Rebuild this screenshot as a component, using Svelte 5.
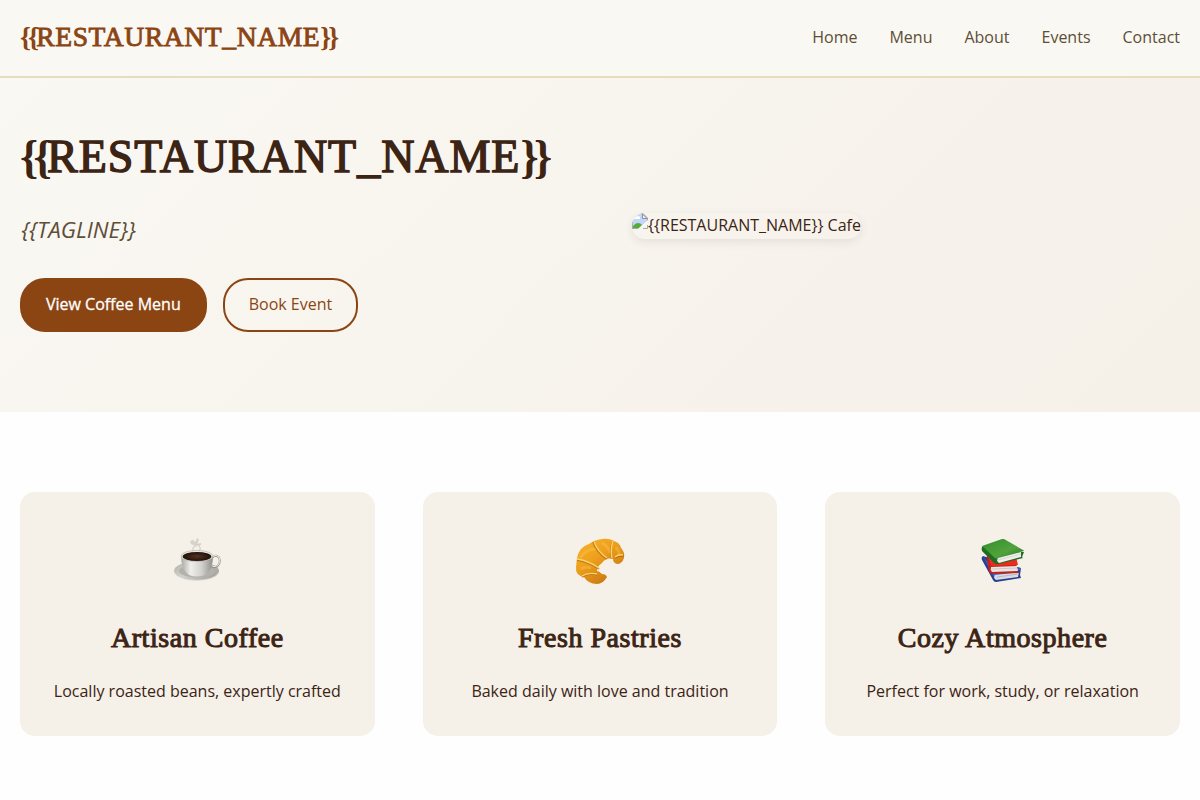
<script>
  const links = ['Home', 'Menu', 'About', 'Events', 'Contact'];
  const cards = [
    { icon: 'coffee', title: 'Artisan Coffee', text: 'Locally roasted beans, expertly crafted' },
    { icon: 'croissant', title: 'Fresh Pastries', text: 'Baked daily with love and tradition' },
    { icon: 'books', title: 'Cozy Atmosphere', text: 'Perfect for work, study, or relaxation' }
  ];
</script>

{#snippet name()}<span class="brace">{'{{'}</span>RESTAURANT_NAME<span class="brace">{'}}'}</span>{/snippet}

<header>
  <div class="logo display">{@render name()}</div>
  <nav>
    {#each links as link}<a href="#top">{link}</a>{/each}
  </nav>
</header>

<section class="hero">
  <div class="intro">
    <h1 class="display">{@render name()}</h1>
    <p class="tagline">{'{{TAGLINE}}'}</p>
    <div class="buttons">
      <a class="btn primary" href="#top">View Coffee Menu</a>
      <a class="btn" href="#top">Book Event</a>
    </div>
  </div>
  <div class="visual">
    <div class="photo">
      <svg width="16" height="16" viewBox="0 0 16 16">
        <path d="M0 1h11l4 4v4L7 16H0z" fill="#c3d5f8" />
        <path d="M0 6q1-3 4-2 2-2 4 0v2H0z" fill="#fff" />
        <path d="M0 16v-1q4-7 9-4l1 1-4 4z" fill="#55ac36" />
        <path d="M0 .5h11l4.5 4.5v4M.5 0v16M0 15.5h6M11 15.5h4.5V12" fill="none" stroke="#a5a9ad" />
        <path d="M10.5 1v4.5H15z" fill="#f5f5f5" stroke="#8d9195" />
        <path d="M16 7v3l-6 6H6z" fill="#faf8f3" />
      </svg><span>{'{{RESTAURANT_NAME}} Cafe'}</span>
    </div>
  </div>
</section>

<section class="features">
  {#each cards as card}
    <article>
      <div class="icon">
        {#if card.icon === 'coffee'}
          <svg width="60" height="60" viewBox="0 0 60 60">
            <defs>
              <linearGradient id="cup"><stop offset="0" stop-color="#aaa8a3" /><stop offset=".3" stop-color="#efeeeb" /><stop offset=".65" stop-color="#d2d0cb" /><stop offset="1" stop-color="#8f8d88" /></linearGradient>
              <linearGradient id="saucer" x2="1" y2=".5"><stop stop-color="#b2b0ab" /><stop offset=".45" stop-color="#d2d0cb" /><stop offset="1" stop-color="#aaa8a4" /></linearGradient>
              <radialGradient id="brew"><stop stop-color="#563321" /><stop offset="1" stop-color="#211009" /></radialGradient>
            </defs>
            <ellipse cx="29.5" cy="39" rx="22.5" ry="9.6" fill="url(#saucer)" />
            <ellipse cx="30" cy="39" rx="18" ry="6.5" fill="#b3b1ac" />
            <path d="M7.5 41q5 7.3 22 7.3t22-7.3" fill="none" stroke="#e7e4df" stroke-width=".7" />
            <ellipse cx="48" cy="29.5" rx="4.6" ry="5.8" transform="rotate(20 48 29.5)" fill="none" stroke="#96948f" stroke-width="2" />
            <ellipse cx="48" cy="29.1" rx="4.6" ry="5.6" transform="rotate(20 48 29.1)" fill="none" stroke="#e9e8e4" stroke-width="1" />
            <path d="M14 24q0 14 8 19 8 3 16 0 8-5 8-19z" fill="url(#cup)" />
            <ellipse cx="30" cy="24" rx="16" ry="5.6" fill="#e9e7e2" stroke="#a6a39e" stroke-width=".5" />
            <ellipse cx="30" cy="24.5" rx="14.3" ry="4.6" fill="url(#brew)" />
            <path d="M26 19q-1-3 2-5M32 19q3-3-1-6" fill="none" stroke="#b5b3ae" stroke-width="1.2" opacity=".5" />
            <path d="M23 10q3-4 4-1t3-3q3 1 1 4t3 1q1 3-3 2-3 3-4 0-3 0-4-3z" fill="#aaa9a5" opacity=".42" />
          </svg>
        {:else if card.icon === 'croissant'}
          <svg width="60" height="60" viewBox="0 0 60 60">
            <defs>
              <linearGradient id="crust" x2=".75" y2="1"><stop stop-color="#f6b52c" /><stop offset=".45" stop-color="#eea01d" /><stop offset=".75" stop-color="#d98716" /><stop offset="1" stop-color="#c46d12" /></linearGradient>
            </defs>
            <path d="M7 26Q9 15 19 12q5-4 13-5 7-1 12 2 6 2 7 7 4 4 3 10-2 6-7 6-4-1-4-5-7-2-11 4-5 3-5 8 2 0 5 3 4 0 5 3-4 7-10 7-9 0-13-7Q5 43 6 35z" fill="url(#crust)" />
            <path d="M10 26q6-9 16-9M11 37q4-3 10-1M32 11q7 4 8 10M46 15q4 5 3 9" fill="none" stroke="#ffc552" stroke-width="3" opacity=".38" />
            <path d="M29 37q-9-7-22-9M42 26q-3-6 1-17M37 27Q27 21 23 10M27 43q-8-3-15 2M45 26q4-3 9-2" fill="none" stroke="#b5680f" stroke-width="1.8" opacity=".7" />
            <path d="M29 36Q19 29 7 27M42 26q-2-7 1-17M37 26Q28 20 24 10M27 42q-9-2-15 2M45 25q4-3 8-2" fill="none" stroke="#f8d568" stroke-width="1.4" />
          </svg>
        {:else}
          <svg width="60" height="60" viewBox="0 0 60 60">
            <defs>
              <linearGradient id="green" x2="1" y2="1"><stop stop-color="#318d2d" /><stop offset=".6" stop-color="#51a33c" /><stop offset="1" stop-color="#267b22" /></linearGradient>
            </defs>
            <path d="M10 24q-2 1-1 4l11 20q1 2 3 2l25-4-1-3 1-7z" fill="#263f91" />
            <path d="M10 24l12 17 26-5-1 2-24 3 23 1-2 2-22 3z" fill="#446bd1" />
            <path d="m22 43 24-3-1 5-22 3q-3-2-1-5z" fill="#d9dbe1" />
            <path d="m24 45 21-3" stroke="#a6adba" stroke-width=".7" />
            <path d="M15 23q-2 1-1 4l2 12q0 3 3 3l27-1v-1l-2-1-1-12z" fill="#c5211b" />
            <path d="m15 23 3 11 27-1-2-8z" fill="#ed2b22" />
            <path d="m18 35 26-1 1 5-26 1q-2-2-1-5z" fill="#e9e4df" />
            <path d="m19 37 25-1" stroke="#bcb5ae" stroke-width=".6" />
            <path d="M10 14q-2 1-1 5l12 12q2 2 5 1l24-6-1-1 2-5z" fill="#216c20" />
            <path d="m9 14 20-7h2l19 11q2 1 0 1L26 26q-2 1-4 0z" fill="url(#green)" />
            <path d="m25 26 23-6v5l-22 6q-3-2-1-5z" fill="#f0eeeb" />
            <path d="m25 28 23-6" stroke="#c8c5c2" stroke-width=".6" />
          </svg>
        {/if}
      </div>
      <h3 class={card.icon}>{card.title}</h3>
      <p>{card.text}</p>
    </article>
  {/each}
</section>

<style>
  :global(body) {
    background: #fefefe;
    color: #3c2415;
    font: 16px/1.6 'Open Sans', sans-serif;
  }
  h1, h3, p { margin: 0; }
  a { color: inherit; text-decoration: none; }
  header {
    box-sizing: border-box;
    height: 78px;
    padding: 0 20px 2px;
    display: flex;
    align-items: center;
    justify-content: space-between;
    background: #faf8f3;
    border-bottom: 2px solid #e8dcc0;
  }
  .display, h3 {
    font-family: 'Liberation Serif', serif;
    font-weight: 400;
    white-space: nowrap;
  }
  .display { letter-spacing: 0.021em; -webkit-text-stroke: 0.031em currentColor; }
  .logo { font-size: 27.6px; color: #8b4513; }
  h1 { font-size: 46px; line-height: 73.8px; margin-bottom: 19px; }
  .brace { font-weight: 700; letter-spacing: -0.1em; -webkit-text-stroke: 0; }
  nav { display: flex; gap: 32px; padding-top: 2px; color: #5d4e37; }
  .hero {
    box-sizing: border-box;
    height: 334px;
    padding: 42px 20px 80px;
    display: grid;
    grid-template-columns: 1fr 1fr;
    gap: 64px;
    align-items: center;
    background: linear-gradient(135deg, #faf8f3 0%, #f5f0e8 100%);
  }
  .intro, .visual { min-width: 0; }
  .tagline { padding-left: 1.5px; font-size: 22.4px; line-height: 34px; font-style: italic; color: #5d4e37; margin-bottom: 31.2px; }
  .buttons { display: flex; gap: 16px; }
  .btn {
    padding: 12.2px 24px;
    border: 2px solid #8b4513;
    border-radius: 25px;
    color: #8b4513;
  }
  .primary { background: #8b4513; color: #fff; -webkit-text-stroke: 0.3px #fff; }
  .photo {
    display: flex;
    width: 229px;
    height: 26px;
    overflow: hidden;
    white-space: nowrap;
    border-radius: 15px;
    box-shadow: 0 3px 10px rgba(60, 36, 21, 0.09);
  }
  .photo svg { flex: none; }
  .features {
    display: grid;
    grid-template-columns: repeat(3, 1fr);
    gap: 48px;
    padding: 80px 20px 64px;
  }
  article {
    box-sizing: border-box;
    height: 244px;
    padding: 32px;
    border-radius: 15px;
    background: #f5f0e8;
    text-align: center;
  }
  article p { white-space: nowrap; }
  .icon { height: 76.8px; margin-bottom: 16px; display: flex; justify-content: center; align-items: center; }
  h3 { font-size: 28px; line-height: 42.1px; margin-bottom: 20px; letter-spacing: 0.55px; -webkit-text-stroke: 1px #3c2415; }
</style>
